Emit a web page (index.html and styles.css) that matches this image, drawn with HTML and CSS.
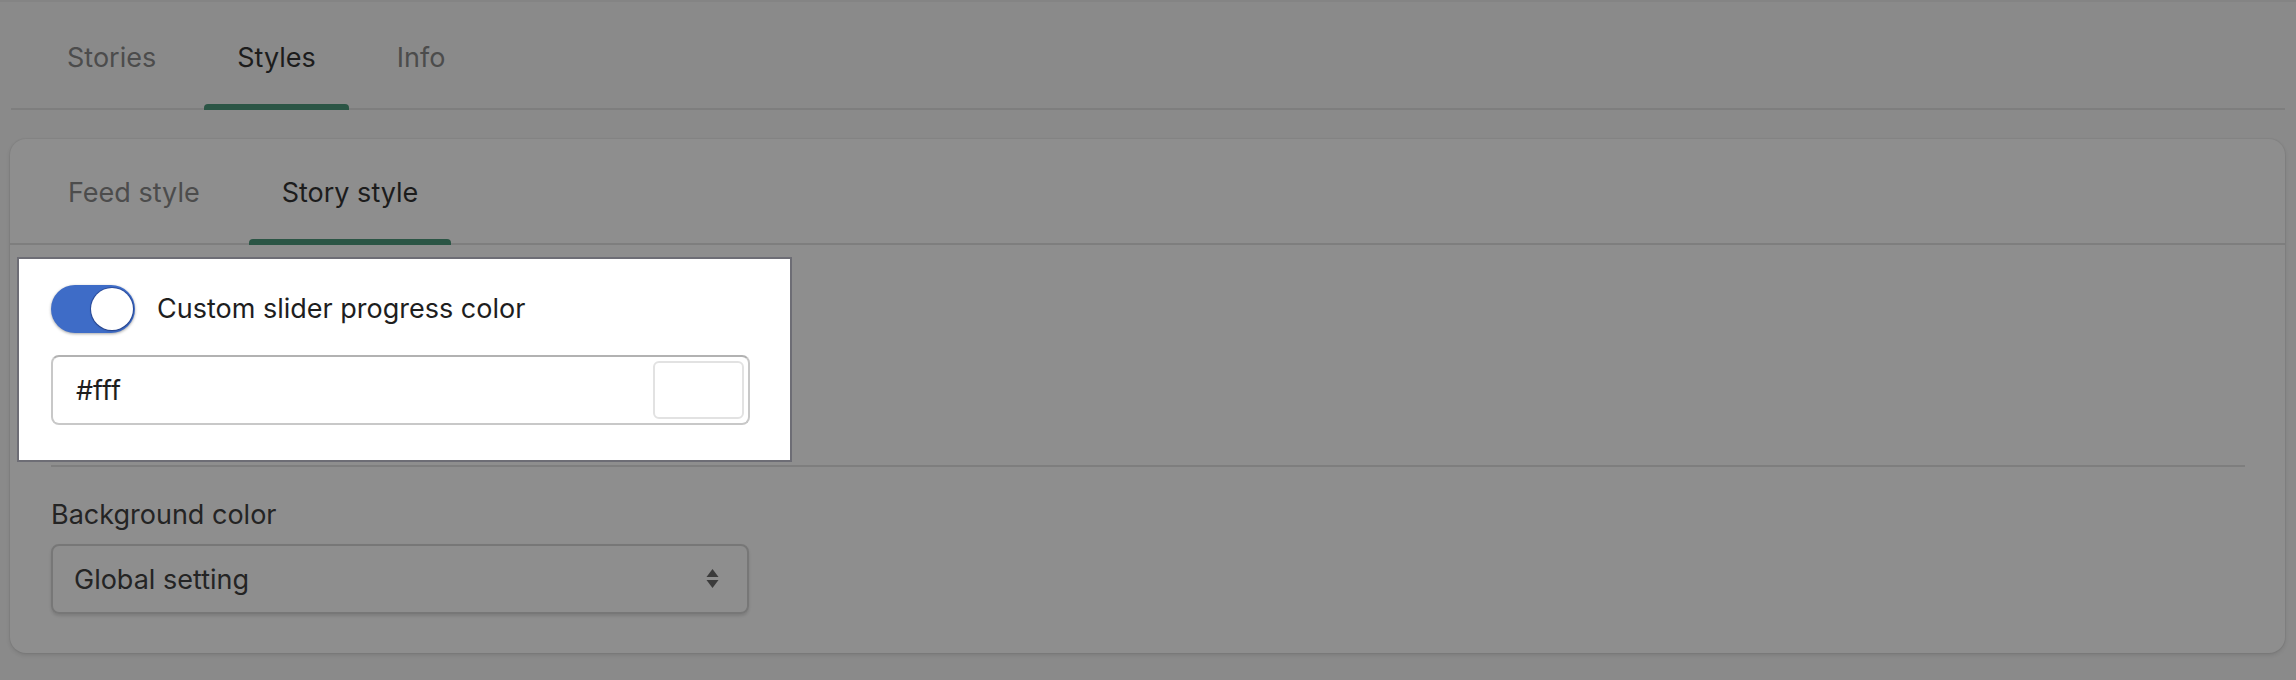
FILE: index.html
```html
<!DOCTYPE html>
<html lang="en">
<head>
    <meta charset="UTF-8">
    <meta name="viewport" content="width=device-width, initial-scale=1.0">
    <title>Styles</title>
    <link rel="stylesheet" href="styles.css">
</head>
<body>
    <nav class="tabs tabs-main">
        <button class="tab">Stories</button>
        <button class="tab active">Styles</button>
        <button class="tab">Info</button>
    </nav>

    <section class="card">
        <nav class="tabs tabs-card">
            <button class="tab">Feed style</button>
            <button class="tab active">Story style</button>
        </nav>

        <div class="card-body">
            <!-- highlighted by the tour -->
            <div class="spot">
                <label class="toggle-row">
                    <span class="toggle on"><span class="knob"></span></span>
                    <span>Custom slider progress color</span>
                </label>
                <div class="color-input">
                    <span>#fff</span>
                    <span class="swatch"></span>
                </div>
            </div>

            <div class="divider"></div>

            <div class="field-label">Background color</div>
            <div class="select">
                <span>Global setting</span>
                <svg width="13" height="20" viewBox="0 0 13 20">
                    <path d="M6.5 0 L12.5 8 L0.5 8 Z" fill="#3b3b3b"/>
                    <path d="M0.5 11 L12.5 11 L6.5 19 Z" fill="#3b3b3b"/>
                </svg>
            </div>
        </div>
    </section>
</body>
</html>
```

FILE: styles.css
```css
body { margin: 0; background: #8a8a8a; font-family: Inter, "Noto Sans", sans-serif; font-size: 27px; color: #242424; border-top: 2px solid #848484; height: 678px; overflow: hidden; }

.tabs { display: flex; border-bottom: 2px solid #7e7e7e; }
.tab { position: relative; background: none; border: 0; font: inherit; line-height: 40px; color: #4c4c4c; padding: 0 33px; cursor: pointer; }
.tab.active { color: #1c1c1c; }
.tab.active::after { content: ""; position: absolute; left: 0; right: 0; bottom: -2px; height: 6px; background: #2b5545; border-radius: 4px 4px 0 0; }

.tabs-main { margin: 0 11px; padding-left: 23px; gap: 15px; }
.tabs-main .tab { padding-top: 36px; padding-bottom: 30px; }

.card { margin: 29px 11px 0 10px; background: #8e8e8e; border-radius: 16px; box-shadow: 0 0 0 1px rgba(0,0,0,0.03), 0 2px 4px rgba(0,0,0,0.12); }
.tabs-card { padding-left: 25px; gap: 16px; }
.tabs-card .tab { padding-top: 34px; padding-bottom: 30px; }

.card-body { padding: 12px 40px 39px 41px; }

.spot { margin-left: -34px; width: 775px; box-sizing: border-box; background: #fff; border: 2px solid #6d6d75; padding: 26px 40px 35px 32px; color: #1e1e1e; }
.toggle-row { display: flex; align-items: center; gap: 22px; line-height: 40px; }
.toggle { display: inline-block; position: relative; width: 84px; height: 48px; border-radius: 24px; background: #d0d0d0; box-shadow: 0 1px 3px rgba(0,0,0,0.35); }
.toggle.on { background: #3e6cc7; }
.knob { position: absolute; top: 3px; right: 2px; width: 42px; height: 42px; border-radius: 50%; background: #fff; box-shadow: 0 0 0 1px rgba(20,40,110,0.45), 0 1px 2px rgba(0,0,0,0.25); }

.color-input { margin-top: 22px; height: 70px; box-sizing: border-box; display: flex; align-items: center; justify-content: space-between; border: 2px solid #c8c8c8; border-top-color: #b2b2b2; border-radius: 8px; padding: 0 4px 0 23px; }
.swatch { width: 91px; height: 58px; box-sizing: border-box; border: 2px solid #e2e2e2; border-radius: 6px; background: #fff; }

.divider { margin-top: 3px; height: 2px; background: #7e7e7e; }

.field-label { margin-top: 28px; line-height: 40px; color: #242424; }
.select { margin-top: 9px; width: 698px; height: 70px; box-sizing: border-box; display: flex; align-items: center; justify-content: space-between; border: 2px solid #777; border-radius: 8px; padding: 0 28px 0 21px; box-shadow: 0 2px 3px rgba(0,0,0,0.12); color: #242424; }
```
